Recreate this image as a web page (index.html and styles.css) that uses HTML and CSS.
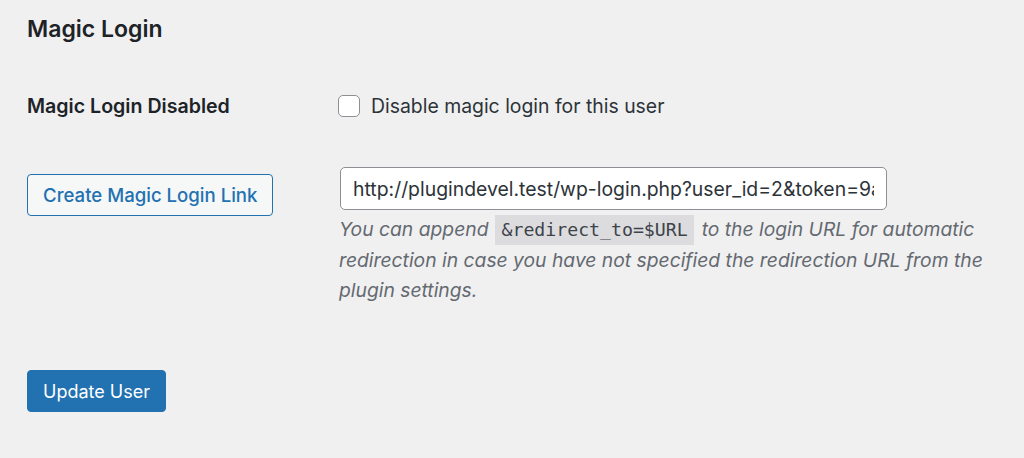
FILE: index.html
```html
<!DOCTYPE html>
<html>
<head>
<meta charset="utf-8">
<link rel="stylesheet" href="styles.css">
</head>
<body>
<div class="wrap">
  <h2 class="title">Magic Login</h2>
  <div class="form-table">
    <div class="row row-check">
      <div class="th">Magic Login Disabled</div>
      <div class="td">
        <label class="check"><span class="box"></span><span>Disable magic login for this user</span></label>
      </div>
    </div>
    <div class="row row-link">
      <div class="th"><button class="btn-secondary" type="button">Create Magic Login Link</button></div>
      <div class="td">
        <input class="url" type="text" value="http://plugindevel.test/wp-login.php?user_id=2&amp;token=9a3f1c7e2b">
        <p class="desc"><span>You can append</span><code>&amp;redirect_to=$URL</code><span>to the login URL for automatic redirection in case you have not specified the redirection URL from the plugin settings.</span></p>
      </div>
    </div>
  </div>
  <div class="submit"><button class="btn-primary" type="button">Update User</button></div>
</div>
</body>
</html>
```
FILE: styles.css
```css
html, body { margin: 0; padding: 0; }
body {
  background: #f0f0f1;
  color: #1d2327;
  font-family: Inter, "Noto Sans", sans-serif;
  width: 1024px;
  height: 458px;
  overflow: hidden;
}
.wrap { padding: 0 0 0 27px; }
.title {
  margin: 0;
  padding-top: 14px;
  font-size: 23px;
  font-weight: 600;
  line-height: 30px;
}
.form-table { margin-top: 46px; }
.row { display: grid; grid-template-columns: 312px 1fr; }
.th { font-size: 19.6px; font-weight: 600; }
.row-check { align-items: center; height: 32px; }
.check { display: flex; align-items: center; gap: 11px; font-size: 19.4px; color: #2c3338; }
.box {
  box-sizing: border-box;
  width: 22px; height: 22px;
  border: 1.5px solid #8c8f94;
  border-radius: 5px;
  background: #fff;
  margin-left: -1px;
}
.row-link { margin-top: 45px; }
.row-link .th { padding-top: 7px; }
.btn-secondary {
  font-family: inherit;
  font-size: 18.6px;
  font-weight: 500;
  color: #2271b1;
  background: #f6f7f7;
  border: 1.5px solid #2271b1;
  border-radius: 4px;
  height: 42px;
  padding: 0 15px;
}
.url {
  box-sizing: border-box;
  width: 547px;
  height: 43px;
  margin-left: 1px;
  font-family: inherit;
  font-size: 19.4px;
  color: #2c3338;
  background: #fff;
  border: 1.5px solid #8c8f94;
  border-radius: 5px;
  padding: 0 12px;
  outline: none;
}
.desc {
  margin: 4px 0 0;
  width: 664px;
  font-size: 19.3px;
  line-height: 30px;
  font-style: italic;
  color: #646970;
}
.desc code {
  display: inline-block;
  font-family: "DejaVu Sans Mono", monospace;
  font-style: normal;
  font-size: 18.2px;
  line-height: 30px;
  color: #3c434a;
  background: #dcdcde;
  padding: 0 6px;
  margin: 0 8px 0 7px;
}
.submit { margin-top: 65px; }
.btn-primary {
  font-family: inherit;
  font-size: 18px;
  color: #fff;
  background: #2271b1;
  border: 1.5px solid #2271b1;
  border-radius: 4px;
  height: 42px;
  padding: 0 15px;
}
```
